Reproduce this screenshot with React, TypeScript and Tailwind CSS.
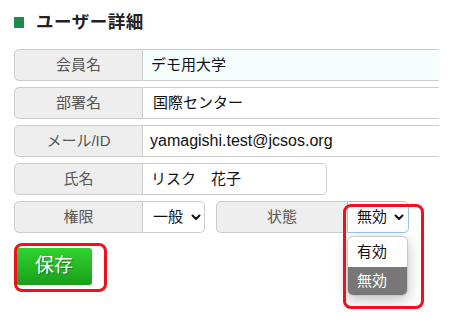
const font = { fontFamily: '"Liberation Sans", "Noto Sans CJK JP", sans-serif' };

const Label = ({ children, className = '' }: { children: React.ReactNode; className?: string }) => (
  <div
    className={`flex items-center justify-center bg-[#eeeeee] border border-[#cccccc] rounded-l-[5px] text-[15px] text-[#555555] ${className}`}
  >
    {children}
  </div>
);

const Chevron = () => (
  <svg width="10" height="7" viewBox="0 0 10 7" className="shrink-0">
    <path d="M1.5 1.5 L5 5 L8.5 1.5" fill="none" stroke="#111" strokeWidth="2" strokeLinecap="round" strokeLinejoin="round" />
  </svg>
);

export default function App() {
  return (
    <div className="relative w-[451px] h-[324px] overflow-hidden bg-white text-[#111]" style={font}>
      <div className="flex items-center gap-3 pl-[14px] pt-[14px] h-[30px]">
        <span className="w-[10px] h-[11px] bg-[#1e8a4c]" />
        <h1 className="text-[17.5px] font-bold text-[#222] tracking-[0.5px]">ユーザー詳細</h1>
      </div>

      <div className="ml-[14px] mt-[19px] w-[425px] flex flex-col gap-[6px]">
        <div className="flex h-[32px]">
          <Label className="w-[129px]">会員名</Label>
          <div className="flex-1 flex items-center pl-[8px] bg-[#f5fdfd] border-y border-[#cccccc] text-[15px]">
            デモ用大学
          </div>
        </div>
        <div className="flex h-[32px]">
          <Label className="w-[129px]">部署名</Label>
          <div className="flex-1 flex items-center pl-[10px] border-y border-[#cccccc] text-[15px]">
            国際センター
          </div>
        </div>
        <div className="flex h-[32px]">
          <Label className="w-[129px]">メール/ID</Label>
          <div className="flex-1 flex items-center pl-[7px] border-y border-[#cccccc] text-[16px]">
            yamagishi.test@jcsos.org
          </div>
        </div>
        <div className="flex h-[32px]">
          <Label className="w-[129px]">氏名</Label>
          <div className="w-[184px] flex items-center pl-[8px] border border-l-0 border-[#cccccc] rounded-r-[5px] text-[15px]">
            リスク　花子
          </div>
        </div>
        <div className="flex h-[32px]">
          <Label className="w-[129px]">権限</Label>
          <div className="w-[62px] flex items-center gap-[8px] pl-[10px] whitespace-nowrap border border-l-0 border-[#cccccc] rounded-r-[5px] text-[15px]">
            一般
            <Chevron />
          </div>
          <Label className="ml-[11px] w-[131px] border-r-0">状態</Label>
          <div className="w-[62px] flex items-center gap-[7px] pl-[9px] whitespace-nowrap border border-[#9cc3ee] rounded-r-[5px] text-[15px]">
            無効
            <Chevron />
          </div>
        </div>
      </div>

      <div className="ml-[16px] mt-[15px]">
        <button className="w-[76px] h-[37px] flex items-center justify-center rounded-[3px] bg-gradient-to-b from-[#2fd42f] to-[#1a9f1a] text-white text-[19px] [text-shadow:1px_1px_1px_rgba(0,0,0,0.35)]">
          保存
        </button>
      </div>

      <div className="absolute left-[347px] top-[236px] w-[61px] rounded-[6px] border border-[#c8c8c8] bg-white overflow-hidden shadow-[0_4px_14px_rgba(0,0,0,0.25)] text-[15px]">
        <div className="h-[30px] flex items-center pl-[9px]">有効</div>
        <div className="h-[28px] flex items-center pl-[9px] bg-[#777777] text-white">無効</div>
      </div>

      <div className="absolute left-[14px] top-[243px] w-[93px] h-[49px] border-[3px] border-[#f0101c] rounded-[8px]" />
      <div className="absolute left-[343px] top-[204px] w-[81px] h-[105px] border-[3px] border-[#f0101c] rounded-[8px]" />
    </div>
  );
}
